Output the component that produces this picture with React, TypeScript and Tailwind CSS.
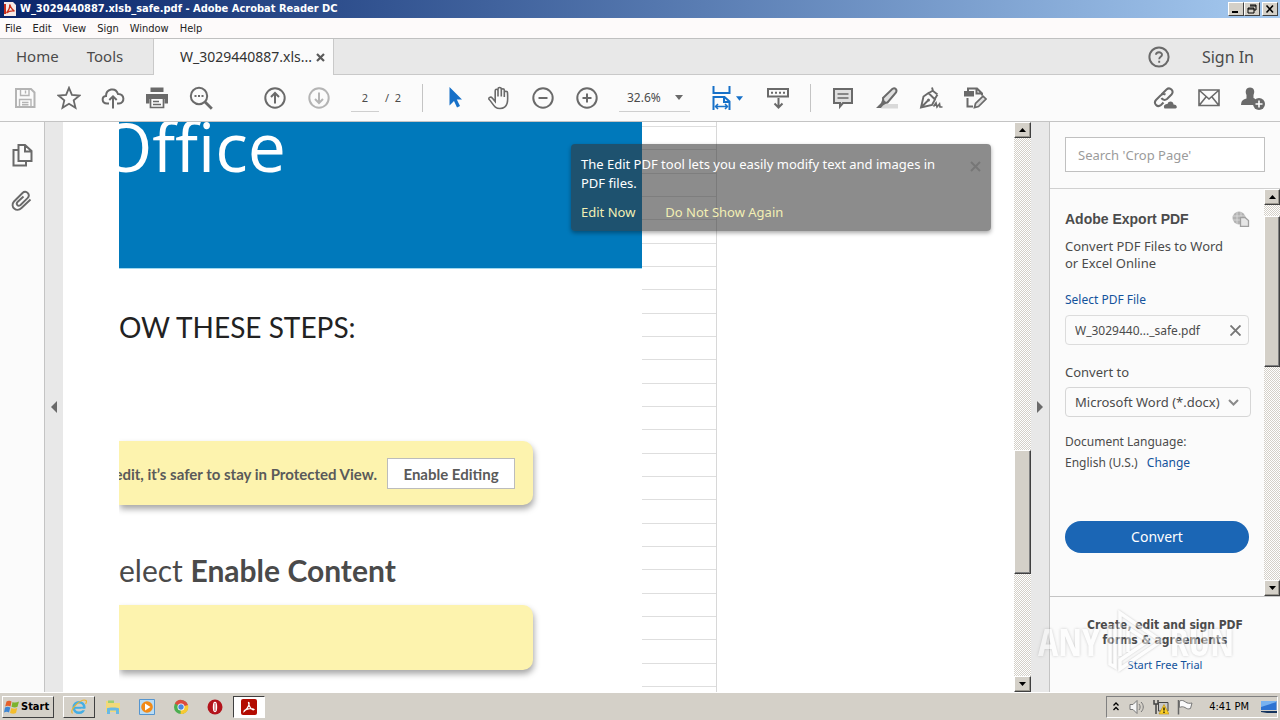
import React from "react";

type IconProps = { children: React.ReactNode; className?: string };

function Icon({ children, className = "" }: IconProps) {
  return (
    <svg
      viewBox="0 0 24 24"
      className={`size-6 shrink-0 ${className}`}
      fill="none"
      stroke="currentColor"
      strokeWidth="2"
      aria-hidden="true"
    >
      {children}
    </svg>
  );
}

function Tool({ label, children, className = "text-[#6a6a6a]" }: { label: string; children: React.ReactNode; className?: string }) {
  return (
    <button type="button" aria-label={label} className={`flex h-full w-11 shrink-0 items-center justify-center ${className}`}>
      <Icon>{children}</Icon>
    </button>
  );
}

function WindowButton({ label, children }: { label: string; children: React.ReactNode }) {
  return (
    <button
      type="button"
      aria-label={label}
      className="flex h-3.5 w-4 items-center justify-center border border-t-white border-l-white border-r-[#404040] border-b-[#404040] bg-[#d4d0c8]"
    >
      <svg viewBox="0 0 12 10" className="h-2.5 w-3 shrink-0" fill="none" stroke="#000" aria-hidden="true">
        {children}
      </svg>
    </button>
  );
}

function ScrollArrow({ up = false }: { up?: boolean }) {
  return (
    <button
      type="button"
      aria-label={up ? "Scroll up" : "Scroll down"}
      className="flex h-4 w-full shrink-0 items-center justify-center border border-t-white border-l-white border-r-[#404040] border-b-[#404040] bg-[#d4d0c8] shadow-[inset_-1px_-1px_0_#9a978f]"
    >
      <svg viewBox="0 0 7 4" className="h-1 w-[7px]" aria-hidden="true">
        <path d={up ? "M0 4L3.5 0L7 4Z" : "M0 0L3.5 4L7 0Z"} fill="#000" />
      </svg>
    </button>
  );
}

const track = "bg-[repeating-conic-gradient(#d4d0c8_0%_25%,#ffffff_0%_50%)] bg-size-[2px_2px]";
const thumb =
  "w-full shrink-0 border border-t-white border-l-white border-r-[#404040] border-b-[#404040] bg-[#d4d0c8] shadow-[inset_-1px_-1px_0_#808080]";

function TitleBar() {
  return (
    <header className="flex h-[18px] shrink-0 items-center bg-linear-to-r from-[#0a246a] to-[#a6caf0] pr-0.5 pl-1">
      <svg viewBox="0 0 12 14" className="mr-1 h-3.5 w-3" aria-hidden="true">
        <path d="M0 0H9L12 3V14H0Z" fill="#f6e9e7" />
        <path d="M0 2H2V12H0Z" fill="#c9301c" />
        <path d="M2.5 11C5 8 6 5 5.7 2.5C7 6 8 8 10.5 9C7 8.500 5 9 2.500 11Z" fill="none" stroke="#c9301c" strokeWidth="1.300" />
      </svg>
      <h1 className="grow pt-px font-['DejaVu_Sans_Condensed','DejaVu_Sans',sans-serif] text-[11px] font-bold text-white">
        W_3029440887.xlsb_safe.pdf - Adobe Acrobat Reader DC
      </h1>
      <div className="flex">
        <WindowButton label="Minimize">
          <path d="M2 8H8" strokeWidth="2" />
        </WindowButton>
        <WindowButton label="Restore">
          <path d="M4 1H10V6H8M4 2H10" />
          <path d="M2 4H8V9H2ZM2 5H8" />
        </WindowButton>
        <div className="ml-0.5">
          <WindowButton label="Close">
            <path d="M2.500 1.500L9 8.500M9 1.500L2.500 8.500" strokeWidth="1.600" />
          </WindowButton>
        </div>
      </div>
    </header>
  );
}

function MenuBar() {
  return (
    <nav className="flex h-5 shrink-0 items-center gap-[11px] bg-[#fdfafa] px-[5px] pt-0.5 font-['DejaVu_Sans_Condensed','DejaVu_Sans',sans-serif] text-[11px] text-[#222]">
      {["File", "Edit", "View", "Sign", "Window", "Help"].map((m) => (
        <button key={m} type="button">
          {m}
        </button>
      ))}
    </nav>
  );
}

function TabBar() {
  return (
    <div className="flex h-[37px] shrink-0 border-t border-[#c0c0c0] text-[15px] text-[#4b4b4b]">
      <div className="flex w-[154px] items-center gap-7 border-r border-b border-[#c9c9c9] bg-[#e8e8e8] pl-4">
        <button type="button">Home</button>
        <button type="button">Tools</button>
      </div>
      <div className="flex w-[179px] items-center justify-between bg-[#fbfbfb] pr-2 pl-[26px] text-sm">
        <span className="text-[#333]">W_3029440887.xls...</span>
        <button type="button" aria-label="Close tab">
          <svg viewBox="0 0 9 9" className="size-[9px]" stroke="#5a5a5a" strokeWidth="2.200" aria-hidden="true">
            <path d="M1 1L8 8M8 1L1 8" />
          </svg>
        </button>
      </div>
      <div className="flex grow items-center justify-end gap-[31px] border-b border-l border-[#c9c9c9] bg-[#e8e8e8] pr-[26px]">
        <button type="button" aria-label="Help" className="text-[#6a6a6a]">
          <Icon>
            <circle cx="12" cy="12" r="9.600" />
            <path d="M9 9.800C9 6.500 15 6.500 15 9.700C15 11.800 12.200 11.800 12.200 14.200M12.200 15.800V17.800" strokeWidth="1.900" />
          </Icon>
        </button>
        <button type="button" className="text-base">
          Sign In
        </button>
      </div>
    </div>
  );
}

function Toolbar() {
  return (
    <div className="flex h-[47px] shrink-0 items-center border-b border-[#c4c4c4] bg-[#fbfbfb] pr-[5px] pl-[3px] text-xs text-[#4b4b4b]">
      <Tool label="Save" className="text-[#b4b4b4]">
        <path d="M3 3H18L21.500 6.500V21H3Z" />
        <path d="M7.500 3V9.500H16V3M12.500 4.500V7.500M6.500 21V13.500H18V21M9 16.500H15.500M9 18.800H15.500" strokeWidth="1.400" />
      </Tool>
      <Tool label="Star">
        <path d="M12 1.800L14.900 8.900L22.500 9.500L16.700 14.400L18.500 21.800L12 17.800L5.500 21.800L7.300 14.400L1.500 9.500L9.100 8.900Z" strokeWidth="1.800" />
      </Tool>
      <Tool label="Upload to cloud">
        <path d="M8 17.500H6C.5 17.500.3 10.500 5 10C5 3 14.500 .5 17 8C24 7.500 24 17.500 18 17.500H16" />
        <path d="M12 22.500V10.500M8.300 14L12 10.300L15.700 14" />
      </Tool>
      <Tool label="Print">
        <path d="M5.500 1.500H18.500V6H5.500Z" fill="currentColor" stroke="none" />
        <path d="M1 8H23V17.500H19.500V13H4.500V17.500H1Z" fill="currentColor" stroke="none" />
        <path d="M5.500 13V21.500H18.500V13M8 15.500H14M8 18.500H16" strokeWidth="1.700" />
      </Tool>
      <Tool label="Find">
        <circle cx="10" cy="10" r="8.200" />
        <path d="M15.800 15.800L22.800 22.800" strokeWidth="2.800" />
        <path d="M5.500 10H7.500M9 10H11M12.500 10H14.500" />
      </Tool>
      <div className="w-[30px]" />
      <Tool label="Previous page">
        <circle cx="12" cy="12" r="9.700" />
        <path d="M12 17.500V7M8 11L12 7L16 11" />
      </Tool>
      <Tool label="Next page" className="text-[#b4b4b4]">
        <circle cx="12" cy="12" r="9.700" />
        <path d="M12 6.500V17M8 13L12 17L16 13" />
      </Tool>
      <label className="ml-2.5 flex items-center gap-1.5 text-[11px]">
        <input aria-label="Page number" defaultValue="2" className="h-7 w-7 border-b border-[#cfcfcf] text-center" />
        <span className="w-[22px] whitespace-pre">/  2</span>
      </label>
      <div className="mr-[10px] ml-[15px] h-7 w-px bg-[#c4c4c4]" />
      <Tool label="Select" className="text-[#1670c8]">
        <path d="M6.500 1L19 13.500H13.800L17 20L14 21.500L11 15L6.500 19.500Z" fill="currentColor" stroke="none" />
      </Tool>
      <Tool label="Hand">
        <path
          d="M8.200 13V4.800C8.200 2.800 11 2.800 11 4.800V10.500M11 10.500V3C11 1 14.300 1 14.300 3V10.500M14.300 10.500V4C14.300 2.300 17.300 2.300 17.300 4V11M17.300 11V6.500C17.300 4.800 20.500 4.800 20.500 6.500C21 14 21.500 22.500 13 22.500C7 22.500 6.500 18 1.800 13C1.500 11 4 10.500 5.500 12.200L8.200 15.500V10"
          strokeWidth="1.600"
        />
      </Tool>
      <Tool label="Zoom out">
        <circle cx="12" cy="12" r="9.700" />
        <path d="M7.500 12H16.500" />
      </Tool>
      <Tool label="Zoom in">
        <circle cx="12" cy="12" r="9.700" />
        <path d="M7.500 12H16.500M12 7.500V16.500" />
      </Tool>
      <button type="button" aria-label="Zoom level" className="ml-[10px] flex h-7 w-[71px] items-center justify-between border-b border-[#cfcfcf] pr-[7px] pl-2">
        <span>32.6%</span>
        <svg viewBox="0 0 8 5" className="h-[5px] w-2" aria-hidden="true">
          <path d="M0 0H8L4 5Z" fill="#6a6a6a" />
        </svg>
      </button>
      <button type="button" aria-label="Fit width" className="ml-[19px] flex w-9 items-center gap-[3px] text-[#1670c8]">
        <Icon>
          <path d="M4.500 0V7H20.500V0M4.500 24V11H15.500L20.500 15.500V24M15 11V16H20.500" />
          <path d="M6.500 20.500H18.500M9 18L6.500 20.500L9 23M16 18L18.500 20.500L16 23" strokeWidth="1.500" />
        </Icon>
        <svg viewBox="0 0 8 5" className="h-[5px] w-[7px] shrink-0" aria-hidden="true">
          <path d="M0 0H8L4 5Z" fill="#1670c8" />
        </svg>
      </button>
      <div className="ml-[11px] flex h-full">
        <Tool label="Keyboard">
          <path d="M2 3H22V10.500H2Z" strokeWidth="2" />
          <path d="M5 6.800H19" strokeDasharray="2 2" />
          <path d="M12.500 12V21.500M8.500 17.500L12.500 21.500L16.500 17.500" />
        </Tool>
      </div>
      <div className="mr-[10px] ml-[10px] h-7 w-px bg-[#c4c4c4]" />
      <Tool label="Comment">
        <path d="M3 3H21V17H12L9 20.500V17H3Z" fill="#e0e0e0" />
        <path d="M6.500 8H17.500M6.500 12H17.500" strokeWidth="1.500" />
      </Tool>
      <Tool label="Highlight">
        <path d="M8 18H23V22.500H6Z" fill="#d9d9d9" stroke="none" />
        <path d="M8 12L17.500 2.800C20 1.500 22.500 3.500 21 6.500L12.500 16.500L8.500 17Z" fill="#e0e0e0" />
        <path d="M7.500 13L12 17L8 19.500L6 22H1L6 17Z" fill="currentColor" stroke="none" />
      </Tool>
      <Tool label="Sign">
        <path d="M2 21.500L4.500 10.500L9.500 7L16 13.500L13 19ZM2 21.500L9 14.500M13 1.500L14 5L18.500 8.500M9 7.500L14 4.500M15.500 13.500L18.500 8.500" strokeWidth="1.900" />
        <circle cx="9.500" cy="14" r="1.500" fill="currentColor" stroke="none" />
        <path d="M14.500 20.500L17 17L18 21L20.500 18L21 21H23.500" strokeWidth="1.700" />
      </Tool>
      <Tool label="Edit document">
        <path d="M1 5H11V10.500H1Z" fill="currentColor" stroke="none" />
        <path d="M5 5V2.500H14L19 7.500V9.500M13.500 2.500V7.500H19M4.500 12V20.500H10" />
        <path d="M11.500 21.500L12.500 17.500L20 10.200L23 13L15.500 20.500Z" fill="#e0e0e0" strokeWidth="1.700" />
      </Tool>
      <div className="grow" />
      <Tool label="Share link">
        <path d="M8.500 8.500L13.500 3.500C17 .5 21.500 5 18.500 8.500L14 13C12 14.500 9.500 14 8.500 12" />
        <path d="M12.500 8.500C10.500 7.500 9 8 7.500 9.500L3 14C0 17.500 4.500 22 8 19L10.500 16.500" />
        <path d="M11.500 22.500C9.500 19 13 17.500 14.500 18C15.500 14.500 20.500 15 20.500 18.500C24.500 18.500 24.500 22.500 22.500 22.500Z" fill="currentColor" stroke="none" />
      </Tool>
      <Tool label="Send by email">
        <path d="M2 4H22V19.500H2ZM2.500 4.500L12 13L21.500 4.500M2.500 19L9 11M21.500 19L15 11" strokeWidth="1.600" />
      </Tool>
      <Tool label="Add person">
        <path d="M9 1.500C13.500 1.500 14 6 12.500 9V12C14 13 16 13 14 15.500V19H0C.5 15 1 14 5.500 12.500V9C4 6 4.500 1.500 9 1.500Z" fill="currentColor" stroke="none" />
        <circle cx="18" cy="18" r="6" fill="currentColor" stroke="none" />
        <path d="M14.500 18H21.500M18 14.500V21.500" stroke="#fff" strokeWidth="1.600" />
      </Tool>
    </div>
  );
}

function SideStrip({ direction }: { direction: "left" | "right" }) {
  return (
    <button
      type="button"
      aria-label={direction === "left" ? "Collapse left pane" : "Collapse right pane"}
      className="flex w-[18px] shrink-0 items-center justify-center bg-[#e8e8e8]"
    >
      <svg viewBox="0 0 6 12" className="h-3 w-1.5" aria-hidden="true">
        <path d={direction === "left" ? "M6 0V12L0 6Z" : "M0 0V12L6 6Z"} fill="#6a6a6a" />
      </svg>
    </button>
  );
}

function PageView() {
  return (
    <div className="flex min-w-0 grow overflow-hidden bg-white pl-14">
      <div className="flex w-[523px] shrink-0 flex-col overflow-hidden font-[Lato,sans-serif]">
        <div className="h-[147px] shrink-0 overflow-hidden border-b border-[#9fd8ee] bg-[#0079bb]">
          <div className="-mt-[22px] flex w-[167px] justify-end font-['Open_Sans','Noto_Sans',sans-serif] text-[68px] leading-[92px] font-medium text-white">
            Office
          </div>
        </div>
        <h2 className="mt-10 text-[28px] leading-9 text-[#222]">OW THESE STEPS:</h2>
        <div className="mt-24 flex h-16 w-[414px] shrink-0 items-center gap-2.5 rounded-r-[10px] bg-[#fdf3ae] pr-[18px] text-[15px] text-[#5a5a5a] shadow-[1px_4px_6px_rgba(0,0,0,0.35)]">
          <p className="flex w-0 grow justify-end pt-0.5 font-bold whitespace-nowrap">edit, it’s safer to stay in Protected View.</p>
          <button type="button" className="h-[31px] w-32 shrink-0 border border-[#bcbcbc] bg-white pt-0.5 font-bold">
            Enable Editing
          </button>
        </div>
        <h2 className="mt-[47px] text-[30px] leading-9 text-[#4a4a4a]">
          elect <strong>Enable Content</strong>
        </h2>
        <div className="mt-[17px] h-[65px] w-[414px] shrink-0 rounded-r-[10px] bg-[#fdf3ae] shadow-[1px_4px_6px_rgba(0,0,0,0.35)]" />
      </div>
      <div className="flex w-[75px] shrink-0 flex-col border-r border-[#d8d8d8] pt-1 pb-[5px]">
        {Array.from({ length: 24 }, (_, i) => (
          <div key={i} className="grow border-t border-[#dedede] last:border-b" />
        ))}
      </div>
    </div>
  );
}

function Toast() {
  return (
    <aside className="absolute top-[22px] right-[23px] flex h-[87px] w-[420px] justify-between rounded bg-[rgba(53,53,53,0.57)] px-2.5 py-[11px] text-[13px] leading-[19px] text-white shadow-[0_2px_4px_rgba(0,0,0,0.35)]">
      <div>
        <p className="w-[370px]">The Edit PDF tool lets you easily modify text and images in PDF files.</p>
        <div className="mt-2.5 flex gap-[30px] text-[#f2efb4]">
          <button type="button">Edit Now</button>
          <button type="button">Do Not Show Again</button>
        </div>
      </div>
      <button type="button" aria-label="Close" className="mt-1.5 self-start">
        <svg viewBox="0 0 11 11" className="size-[11px]" stroke="#777" strokeWidth="2" aria-hidden="true">
          <path d="M1 1L10 10M10 1L1 10" />
        </svg>
      </button>
    </aside>
  );
}

function ExportPanel() {
  return (
    <aside className="flex w-[231px] shrink-0 flex-col border-l border-[#c4c4c4] bg-[#fbfbfb] text-[13px] text-[#4b4b4b]">
      <div className="h-[67px] shrink-0 border-b border-[#d0d0d0] pt-[15px] pl-[15px]">
        <input aria-label="Search tools" placeholder="Search 'Crop Page'" className="h-[35px] w-[200px] border border-[#c0c0c0] bg-white px-3 placeholder:text-[#9b9b9b]" />
      </div>
      <div className="flex min-h-0 grow">
        <div className="flex w-[214px] flex-col pr-[14px] pl-[15px]">
          <div className="mt-5 flex items-center justify-between leading-5">
            <h2 className="font-['Liberation_Sans',sans-serif] text-sm font-bold">Adobe Export PDF</h2>
            <svg viewBox="0 0 18 16" className="h-4 w-[18px]" aria-hidden="true">
              <circle cx="7" cy="7" r="6.500" fill="#b2b2b2" />
              <path d="M1 5H13M1 9H13M5 1V13M9 1V13" stroke="#dedede" strokeWidth=".8" />
              <path d="M8.500 6.500H13L16.500 9.500V15.300H8.500Z" fill="#e6e6e6" stroke="#a0a0a0" strokeWidth="1.300" />
            </svg>
          </div>
          <p className="mt-[9px] leading-[17px]">
            Convert PDF Files to Word
            <br />
            or Excel Online
          </p>
          <label htmlFor="pdf-file" className="mt-[19px] text-xs leading-[18px] text-[#14539c]">
            Select PDF File
          </label>
          <div className="mt-1.5 flex h-[30px] w-[184px] items-center justify-between rounded-sm border border-[#dcdcdc] pr-[7px] pl-[9px]">
            <input id="pdf-file" readOnly defaultValue="W_3029440..._safe.pdf" className="w-[145px] pt-0.5 text-xs" />
            <button type="button" aria-label="Remove file">
              <svg viewBox="0 0 11 11" className="size-[11px]" stroke="#777" strokeWidth="1.900" aria-hidden="true">
                <path d="M.5 .5L10.500 10.500M10.500 .5L.5 10.500" />
              </svg>
            </button>
          </div>
          <label htmlFor="format" className="mt-[18px] leading-[18px]">
            Convert to
          </label>
          <div className="mt-1.5 grid w-[186px] items-center">
            <select id="format" className="col-start-1 row-start-1 h-[30px] appearance-none rounded-sm border border-[#d6d6d6] pt-0.5 pl-[9px]">
              <option>Microsoft Word (*.docx)</option>
            </select>
            <svg viewBox="0 0 11 7" className="col-start-1 row-start-1 mr-3 h-[7px] w-[11px] justify-self-end" fill="none" stroke="#8a8a8a" strokeWidth="2" aria-hidden="true">
              <path d="M1 1L5.500 5.500L10 1" />
            </svg>
          </div>
          <p className="mt-[14px] text-xs leading-[21px]">
            Document Language:
            <br />
            English (U.S.){" "}
            <a href="#language" className="ml-1.5 text-[#14539c]">
              Change
            </a>
          </p>
          <button type="button" className="mt-12 h-8 w-[184px] shrink-0 rounded-full bg-[#1b66b5] text-sm text-white">
            Convert
          </button>
        </div>
        <div className={`flex w-4 shrink-0 flex-col ${track}`}>
          <ScrollArrow up />
          <div className="h-[11px] shrink-0" />
          <div className={`h-[151px] ${thumb}`} />
          <div className="grow" />
          <ScrollArrow />
        </div>
      </div>
      <div className="flex h-24 shrink-0 flex-col items-center border-t border-[#c4c4c4] pt-[21px]">
        <h3 className="text-center font-['DejaVu_Sans_Condensed','DejaVu_Sans',sans-serif] text-xs leading-[15px] font-bold">
          Create, edit and sign PDF
          <br />
          forms & agreements
        </h3>
        <a href="#trial" className="mt-2 text-[11px] leading-[18px] text-[#14539c]">
          Start Free Trial
        </a>
      </div>
    </aside>
  );
}

function Watermark() {
  return (
    <div className="pointer-events-none absolute right-[46px] bottom-12 flex items-center gap-1.5 font-['Liberation_Sans_Narrow','Open_Sans_Condensed','Liberation_Sans',sans-serif] text-[38px] leading-[60px] text-white opacity-50 [text-shadow:0_0_3px_#999]">
      <span>ANY</span>
      <svg viewBox="0 0 58 62" className="h-[62px] w-[58px] drop-shadow-[0_0_1px_#999]" fill="none" stroke="#fff" strokeWidth="3.500" aria-hidden="true">
        <path d="M4 16V54L9 57V14" />
        <path d="M14 46V3L55 31L14 59V50L42 31L22 18V42" />
      </svg>
      <span>RUN</span>
    </div>
  );
}

function TaskItem({ label, active = false, children, className = "" }: { label: string; active?: boolean; children: React.ReactNode; className?: string }) {
  return (
    <button
      type="button"
      aria-label={label}
      className={`flex h-[22px] w-8 items-center justify-center border ${
        active ? "border-t-[#404040] border-r-white border-b-white border-l-[#404040] bg-white" : className || "border-transparent"
      }`}
    >
      <svg viewBox="0 0 16 16" className="size-4" fill="none" aria-hidden="true">
        {children}
      </svg>
    </button>
  );
}

const raised = "border-t-white border-l-white border-r-[#404040] border-b-[#404040]";

function Taskbar() {
  return (
    <footer className="flex h-7 shrink-0 items-center border-t border-white bg-[#d4d0c8] pr-0.5 pl-0.5 font-['DejaVu_Sans_Condensed','DejaVu_Sans',sans-serif] text-[11px] text-black">
      <button type="button" className={`flex h-[22px] w-[52px] items-center border pl-px font-bold ${raised}`}>
        <svg viewBox="0 0 16 16" className="mr-px size-4 shrink-0" aria-hidden="true">
          <path d="M2.500 2.500C4.500 1 6.500 2 7.500 2.500L6.500 7.500C4.500 6.500 3 6.500 1.200 7.500Z" fill="#e4602b" />
          <path d="M8.500 3C10.500 4 13 3.500 15 2.500L13.500 7.800C11.500 8.800 9.500 8.500 7.500 7.700Z" fill="#7cb32d" />
          <path d="M1 8.500C3 7.500 4.500 7.500 6.300 8.500L5 13.500C3.500 12.500 2 12.500 0 13.500Z" fill="#3e86d3" />
          <path d="M7.300 9C9.300 10 11 10 13.200 9L12 14C10 15 8 14.800 6 14Z" fill="#f4bd2c" />
        </svg>
        <span className="pt-0.5">Start</span>
      </button>
      <div className="ml-[9px] flex gap-0.5">
        <TaskItem label="Internet Explorer" className={raised}>
          <circle cx="8" cy="8.500" r="5.300" stroke="#45aee4" strokeWidth="2.600" />
          <path d="M4 8.800H13" stroke="#45aee4" strokeWidth="2" />
          <path d="M10 10.500H15" stroke="#d4d0c8" strokeWidth="1.500" />
          <path d="M1.500 14.500C-2 10 11-1 15 1.500C16 2.500 15 4.500 14.500 5" stroke="#eeb52e" strokeWidth="1.200" />
        </TaskItem>
        <TaskItem label="Explorer">
          <path d="M1 2H6L7 4H15V13H1Z" fill="#f2d979" />
          <path d="M3 1.500H9V4H3Z" fill="#9bcf72" />
          <path d="M2 15V9.500C2 8 14 8 14 9.500V15H11V11.500H5V15Z" fill="#68b9e4" />
        </TaskItem>
        <TaskItem label="Media Player">
          <path d="M.5 .5H15.500V15.500H.5Z" fill="#b9dcf5" stroke="#5595cf" />
          <circle cx="8" cy="8" r="5.800" fill="#f28a17" />
          <path d="M6 4.500L11.500 8L6 11.500Z" fill="#fff" />
        </TaskItem>
        <TaskItem label="Chrome">
          <circle cx="8" cy="8" r="7" fill="#4cae50" />
          <path d="M8 8L1.900 4.500A7 7 0 0 1 15 8Z" fill="#dd4b3e" />
          <path d="M8 8L15 6A7 7 0 0 1 7.500 15Z" fill="#f8c932" />
          <circle cx="8" cy="8" r="3.500" fill="#fff" />
          <circle cx="8" cy="8" r="2.700" fill="#4a87e0" />
        </TaskItem>
        <TaskItem label="Opera">
          <circle cx="8" cy="8" r="7.500" fill="#b3131b" />
          <ellipse cx="8" cy="8" rx="2.200" ry="5.200" fill="#fff" />
          <path d="M8 4V12" stroke="#b3131b" strokeWidth=".8" />
        </TaskItem>
        <TaskItem label="Acrobat Reader" active>
          <rect width="16" height="16" rx="2" fill="#b30b00" />
          <path d="M3 12.500C3.500 10 11 8.500 13 10.500C11 12 7.500 7 7.500 3.500C9 3 8 9 3 12.500Z" stroke="#fff" strokeWidth="1.200" />
        </TaskItem>
      </div>
      <div className="grow" />
      <div className="flex h-[22px] items-center border border-t-[#808080] border-r-white border-b-white border-l-[#808080] pl-1.5">
        <svg viewBox="0 0 6 9" className="h-[9px] w-1.5" fill="none" stroke="#000" strokeWidth="1.300" aria-hidden="true">
          <path d="M.5 3.500L3 1L5.500 3.500M.5 8L3 5.500L5.500 8" />
        </svg>
        <svg viewBox="0 0 16 16" className="ml-2.5 size-4" fill="none" aria-hidden="true">
          <path d="M1 5.500H4L8 1.500V14.500L4 10.500H1Z" fill="#f5f5f5" stroke="#777" />
          <path d="M10 5C11.500 7 11.500 9 10 11M12 3C15 6 15 10 12 13" stroke="#777" />
        </svg>
        <svg viewBox="0 0 16 16" className="ml-2 size-4" fill="none" aria-hidden="true">
          <path d="M5.500 3.500H15V12H5.500Z" fill="#c8c8c8" stroke="#444" />
          <path d="M1 1V5H5V1M3 5V15" stroke="#444" strokeWidth="1.500" />
          <path d="M11 5.500L16 15H6Z" fill="#fbcf27" stroke="#b98a0a" strokeWidth=".6" />
          <path d="M11 8.500V11.500M11 12.500V14" stroke="#000" strokeWidth="1.200" />
        </svg>
        <svg viewBox="0 0 16 16" className="ml-2 size-4" fill="none" aria-hidden="true">
          <path d="M1.500 1V15.500" stroke="#666" strokeWidth="1.500" />
          <path d="M2.500 2C5 1 6.500 1.500 8.500 3C10.500 4.500 12.500 4.500 15 4L13.500 9.500C11 10.500 9.500 9.500 8 8.500C6 7.500 4.500 7.500 2.500 8.500Z" fill="#fafafa" stroke="#777" />
        </svg>
        <time className="ml-4 pt-0.5">4:41 PM</time>
        <svg viewBox="0 0 16 14" className="ml-3 h-3.5 w-4" aria-hidden="true">
          <path d="M0 1H15.500V10H0Z" fill="#2d73d2" />
          <path d="M0 7L15.500 2V1H0Z" fill="#77b2f0" />
          <path d="M0 11H16V13H6L0 12Z" fill="#15345e" />
        </svg>
      </div>
    </footer>
  );
}

export default function App() {
  return (
    <div className="relative flex h-screen flex-col overflow-hidden bg-white font-['Noto_Sans',sans-serif]">
      <TitleBar />
      <MenuBar />
      <TabBar />
      <Toolbar />
      <div className="flex min-h-0 grow">
        <nav className="flex w-[45px] shrink-0 flex-col items-center gap-[22px] border-r border-[#c4c4c4] bg-[#fbfbfb] pt-[21px] text-[#6a6a6a]">
          <button type="button" aria-label="Page thumbnails">
            <Icon>
              <path d="M8.500 2H15L21.500 8V18H8.500ZM15 2V8.500H21.500M8 7H3.500V22.500H16V18.500" />
            </Icon>
          </button>
          <button type="button" aria-label="Attachments">
            <Icon>
              <path
                d="M20.500 10.500L11.500 19C6.500 24 -.5 17.500 4 12.500L12.500 4C16 .5 21 5.500 17.500 9.200L10.500 16C8 18 5.500 15.200 7.500 13L13.500 7.500"
                strokeWidth="1.900"
              />
            </Icon>
          </button>
        </nav>
        <SideStrip direction="left" />
        <main className="relative flex min-w-0 grow">
          <PageView />
          <Toast />
        </main>
        <div className={`flex w-[17px] shrink-0 flex-col ${track}`}>
          <ScrollArrow up />
          <div className="h-[312px] shrink-0" />
          <div className={`h-[124px] ${thumb}`} />
          <div className="grow" />
          <ScrollArrow />
        </div>
        <SideStrip direction="right" />
        <ExportPanel />
      </div>
      <Taskbar />
      <Watermark />
    </div>
  );
}
